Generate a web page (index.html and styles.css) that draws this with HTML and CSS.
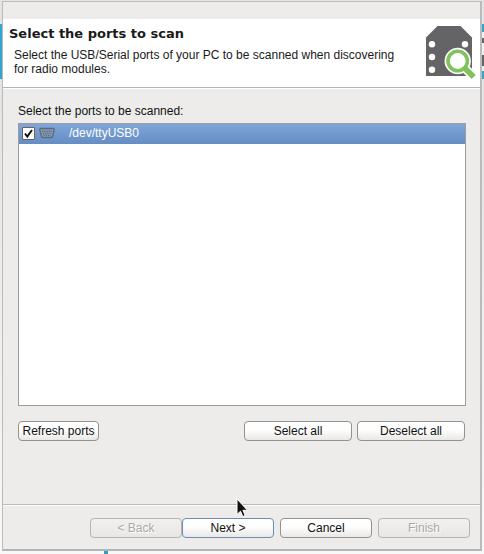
FILE: index.html
```html
<!DOCTYPE html>
<html lang="en">
<head>
<meta charset="utf-8">
<meta name="viewport" content="width=device-width, initial-scale=1">
<title>Select the ports to scan</title>
<link rel="stylesheet" href="styles.css">
</head>
<body>
<main class="dialog">
  <header class="banner">
    <div class="banner-text">
      <h1>Select the ports to scan</h1>
      <p>Select the USB/Serial ports of your PC to be scanned when discovering for radio modules.</p>
    </div>
    <svg class="banner-icon" viewBox="0 0 52 56" aria-hidden="true">
      <path fill="#646466" d="M12.500 1h23L47 12.500V51H1V12.500z"/>
      <g fill="#fff">
        <circle cx="7" cy="19.300" r="3.200"/>
        <circle cx="7" cy="32" r="3.200"/>
        <circle cx="7" cy="44.700" r="3.200"/>
        <circle cx="40" cy="19.300" r="3.200"/>
        <circle cx="32.700" cy="36" r="13.200"/>
      </g>
      <path stroke="#fff" stroke-width="9" d="M39 42.300l9.500 9.500"/>
      <circle cx="32.700" cy="36" r="9.700" fill="#fff" stroke="#7fc35c" stroke-width="3.600"/>
      <path stroke="#7fc35c" stroke-width="5.600" d="M39 42.300l9.700 9.700"/>
    </svg>
  </header>
  <section class="content">
    <h2 id="ports-label">Select the ports to be scanned:</h2>
    <ul class="port-list" aria-labelledby="ports-label">
      <li>
        <label class="port">
          <input type="checkbox" checked>
          <svg class="port-icon" viewBox="0 0 16 12" aria-hidden="true">
            <path fill="#7f9cc4" stroke="#66676a" stroke-width="1.300" d="M2 1.500h12q1.500 0 1.200 1.500l-1.500 6q-.3 1.500-1.700 1.500H4q-1.400 0-1.700-1.500L.8 3Q.5 1.500 2 1.500z"/>
            <path stroke="#5c6676" stroke-width="1.200" stroke-dasharray="1.200 1" d="M3 4.300h10.500M3.800 6.300h9M4.500 8.300h7"/>
          </svg>
          <span>/dev/ttyUSB0</span>
        </label>
      </li>
    </ul>
    <div class="actions">
      <button type="button" class="refresh">Refresh ports</button>
      <button type="button" class="wide">Select all</button>
      <button type="button" class="wide">Deselect all</button>
    </div>
  </section>
  <footer class="wizard">
    <div class="pair">
      <button type="button" disabled>&lt; Back</button>
      <button type="button" class="default">Next &gt;</button>
    </div>
    <button type="button">Cancel</button>
    <button type="button" disabled>Finish</button>
    <svg class="pointer" viewBox="0 0 12 20" aria-hidden="true">
      <path fill="#111" stroke="#fff" d="M1 1v15.500l3.500-3.300 2.300 5.300 2.400-1-2.300-5.200H11.500z"/>
    </svg>
  </footer>
</main>
</body>
</html>
```
FILE: styles.css
```css
* {
  box-sizing: border-box;
}

body {
  margin: 0;
  min-height: 100vh;
  padding: 1px 2px 3px;
  display: flex;
  font: 12px/14px "Liberation Sans", Arial, sans-serif;
  color: #1a1a1a;
  background:
    linear-gradient(#2ba3ba, #2ba3ba) 104px 100% / 4px 4px no-repeat,
    linear-gradient(transparent 24px, #35a3cf 24px, #35a3cf 79px, transparent 79px) 0 0 / 2px 100% no-repeat,
    linear-gradient(transparent 24px, #35a3cf 24px, #35a3cf 32px, #eee 32px, #eee 38px, #666 38px, #666 43px, #eee 43px, #eee 55px, #666 55px, #666 66px, #eee 66px, #eee 71px, #35a3cf 71px, #35a3cf 79px, transparent 79px) 100% 0 / 2px 100% no-repeat,
    linear-gradient(#e4e4e4, #e4e4e4 100px, #f8f8f8);
}

.dialog {
  flex: 1;
  display: flex;
  flex-direction: column;
  padding-top: 17px;
  background: #edecea;
  border: 1px solid #babcbc;
  border-bottom: 2px solid #b2b5b5;
  border-right-width: 2px;
}

h1,
h2,
p,
ul {
  margin: 0;
  padding: 0;
}

.banner {
  display: flex;
  justify-content: space-between;
  gap: 16px;
  min-height: 69px;
  padding: 6px 3px 6px 6px;
  background: #fff;
  border-bottom: 1px solid #b5b5b5;
  box-shadow: 0 1px #fff;
}

h1 {
  margin-top: 1px;
  font: bold 13px/16px "DejaVu Sans", sans-serif;
}

.banner p {
  margin: 6px 0 0 5px;
}

.banner-icon {
  flex: none;
  width: 52px;
  height: 56px;
}

.content {
  flex: 1;
  display: flex;
  flex-direction: column;
  padding: 16px 14px 63px 15px;
}

h2 {
  font: inherit;
  color: #111;
}

.port-list {
  flex: 1;
  margin-top: 5px;
  list-style: none;
  background: #fff;
  border: 1px solid #9c9c9c;
}

.port {
  display: flex;
  align-items: center;
  height: 20px;
  padding: 0 3px 2px;
  color: #fff;
  background: linear-gradient(#80a6d9, #648dc3);
}

.port input {
  appearance: none;
  width: 13px;
  height: 13px;
  margin: 0 4px 0 0;
  border: 1px solid #66645f;
  border-radius: 1px;
  background: #fff;
}

.port input:checked {
  background: #fff url("data:image/svg+xml,%3Csvg xmlns='http://www.w3.org/2000/svg' viewBox='0 0 11 11'%3E%3Cpath d='M2 5.500L4.300 8.500 9 2' fill='none' stroke='%23111' stroke-width='2'/%3E%3C/svg%3E") center / 11px 11px no-repeat;
}

.port-icon {
  width: 16px;
  height: 12px;
  margin-right: 14px;
  fill: none;
}

.actions {
  display: flex;
  gap: 5px;
  margin-top: 15px;
  padding-right: 1px;
}

button {
  width: 92px;
  height: 20px;
  padding: 0;
  font: inherit;
  color: #111;
  background: linear-gradient(#fff, #fdfdfd 45%, #e9e8e6);
  border: 1px solid #92928e;
  border-radius: 4px;
}

button:disabled {
  color: #aaa8a4;
  text-shadow: 1px 1px #fff;
  background: linear-gradient(#f1f0ef, #e8e7e5);
  border-color: #b5b4b0;
}

.default {
  border-color: #6d8cb5;
}

.refresh {
  width: 81px;
  margin-right: auto;
}

.wide {
  width: 108px;
}

.wizard {
  position: relative;
  display: flex;
  justify-content: flex-end;
  gap: 6px;
  padding: 13px 10px 11px;
  border-top: 1px solid #bababa;
  box-shadow: inset 0 1px #fff;
}

.pair {
  display: flex;
}

.pointer {
  position: absolute;
  left: 233px;
  top: -7px;
  width: 12px;
  height: 20px;
}
```
